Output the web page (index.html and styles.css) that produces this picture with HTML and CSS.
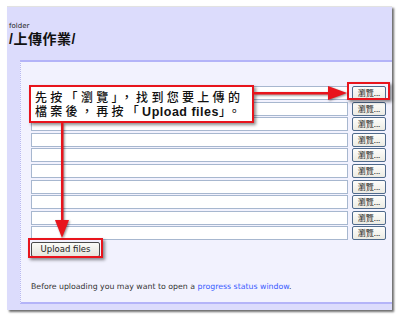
FILE: index.html
```html
<!DOCTYPE html>
<html lang="zh-Hant">
<head>
    <meta charset="UTF-8">
    <title>上傳作業</title>
    <link rel="stylesheet" href="styles.css">
</head>
<body>
    <div class="panel">
        <div class="folder-label">folder</div>
        <h1 class="folder-title">/上傳作業/</h1>

        <div class="upload-box">
            <div class="file-rows">
                <div class="file-row"><span class="file-input"></span><span class="browse-btn">瀏覽...</span></div>
                <div class="file-row"><span class="file-input"></span><span class="browse-btn">瀏覽...</span></div>
                <div class="file-row"><span class="file-input"></span><span class="browse-btn">瀏覽...</span></div>
                <div class="file-row"><span class="file-input"></span><span class="browse-btn">瀏覽...</span></div>
                <div class="file-row"><span class="file-input"></span><span class="browse-btn">瀏覽...</span></div>
                <div class="file-row"><span class="file-input"></span><span class="browse-btn">瀏覽...</span></div>
                <div class="file-row"><span class="file-input"></span><span class="browse-btn">瀏覽...</span></div>
                <div class="file-row"><span class="file-input"></span><span class="browse-btn">瀏覽...</span></div>
                <div class="file-row"><span class="file-input"></span><span class="browse-btn">瀏覽...</span></div>
                <div class="file-row"><span class="file-input"></span><span class="browse-btn">瀏覽...</span></div>
            </div>
            <div class="upload-btn">Upload files</div>
            <p class="note">Before uploading you may want to open a <a href="#">progress status window</a>.</p>
        </div>
    </div>

    <!-- annotation overlay -->
    <div class="callout">
        <div class="callout-line">先按「瀏覽」，找到您要上傳的</div>
        <div class="callout-line">檔案後，再按「<b>Upload files</b>」。</div>
    </div>
    <div class="mark mark-browse"></div>
    <div class="mark mark-upload"></div>
    <svg class="arrows" width="400" height="318" viewBox="0 0 400 318">
        <g fill="#e8141c" stroke="none">
            <rect x="254" y="92" width="80" height="2.5"/>
            <polygon points="328,86 347,93 328,100"/>
            <rect x="61" y="123" width="2.5" height="100"/>
            <polygon points="55,220 62,238 69,220"/>
        </g>
    </svg>
</body>
</html>
```

FILE: styles.css
```css
body {
    margin: 0;
    background-color: #fff;
    font-family: "DejaVu Sans", Verdana, sans-serif;
    position: relative;
    width: 400px;
    height: 318px;
    overflow: hidden;
}
.panel {
    margin: 6px 0 0 7px;
    width: 385px;
    height: 304px;
    background-color: #dcdcfc;
    border-top: 1px solid #e2e2e2;
    box-shadow: 2px 2px 2px #6e6e6e;
    box-sizing: border-box;
    padding-top: 15px;
}
.folder-label {
    margin-left: 2px;
    font-size: 7px;
    line-height: 8px;
    color: #222;
}
.folder-title {
    margin: 1px 0 0 2px;
    font-family: "Liberation Sans", "Noto Sans CJK TC", sans-serif;
    font-size: 14px;
    line-height: 16px;
    font-weight: bold;
    letter-spacing: 0.5px;
    color: #111;
}
.upload-box {
    margin: 13px 0 0 13px;
    height: 244px;
    background-color: #f2f2fe;
    border-top: 2px solid #b4b4f8;
    border-bottom: 2px solid #b4b4f8;
    border-left: 1px dotted #b8b8f0;
    box-sizing: border-box;
    padding: 24px 0 0 10px;
}
.file-rows {
    display: flex;
    flex-direction: column;
    gap: 1.6px;
}
.file-row {
    display: flex;
    align-items: center;
    gap: 4px;
}
.file-input {
    width: 317px;
    height: 14px;
    box-sizing: border-box;
    background-color: #fff;
    border: 1px solid #a7b7cf;
}
.browse-btn {
    width: 34px;
    height: 14px;
    box-sizing: border-box;
    border: 1px solid #4f6a8c;
    border-radius: 2px;
    background: linear-gradient(#fdfdfb, #ecebe3);
    font-family: "Noto Sans CJK TC", sans-serif;
    font-size: 8px;
    line-height: 12px;
    text-align: center;
    color: #222;
}
.upload-btn {
    margin-top: 2px;
    width: 69px;
    height: 15px;
    box-sizing: border-box;
    border: 1px solid #4a4a4a;
    border-radius: 2px;
    background: linear-gradient(#fbfbf7, #e6e5dc);
    font-family: "DejaVu Sans", sans-serif;
    font-size: 8.5px;
    line-height: 13px;
    text-align: center;
    color: #222;
}
.note {
    margin: 25px 0 0 0;
    font-size: 7.8px;
    color: #333;
}
.note a {
    color: #3a5cff;
    text-decoration: none;
}

/* annotation overlay */
.callout {
    position: absolute;
    left: 29px;
    top: 85px;
    width: 225px;
    height: 38px;
    box-sizing: border-box;
    padding: 3px 0 0 4px;
    background-color: #fff;
    border: 2.5px solid #e8141c;
    box-shadow: 2px 2px 3px rgba(0,0,0,0.45);
    font-family: "Noto Sans CJK TC", sans-serif;
    font-size: 12px;
    font-weight: 500;
    letter-spacing: 3.3px;
    color: #111;
    white-space: nowrap;
}
.callout-line {
    height: 14px;
    line-height: 14px;
}
.callout b {
    font-family: "Liberation Sans", sans-serif;
    font-size: 12.5px;
    letter-spacing: 0.5px;
}
.mark {
    position: absolute;
    border: 2.5px solid #e8141c;
    box-shadow: 2px 2px 3px rgba(0,0,0,0.45);
}
.mark-browse {
    left: 347px;
    top: 82px;
    width: 39px;
    height: 14px;
}
.mark-upload {
    left: 28px;
    top: 238px;
    width: 71px;
    height: 16px;
}
.arrows {
    position: absolute;
    left: 0;
    top: 0;
    filter: drop-shadow(1px 1px 1px rgba(0,0,0,0.45));
}
```
